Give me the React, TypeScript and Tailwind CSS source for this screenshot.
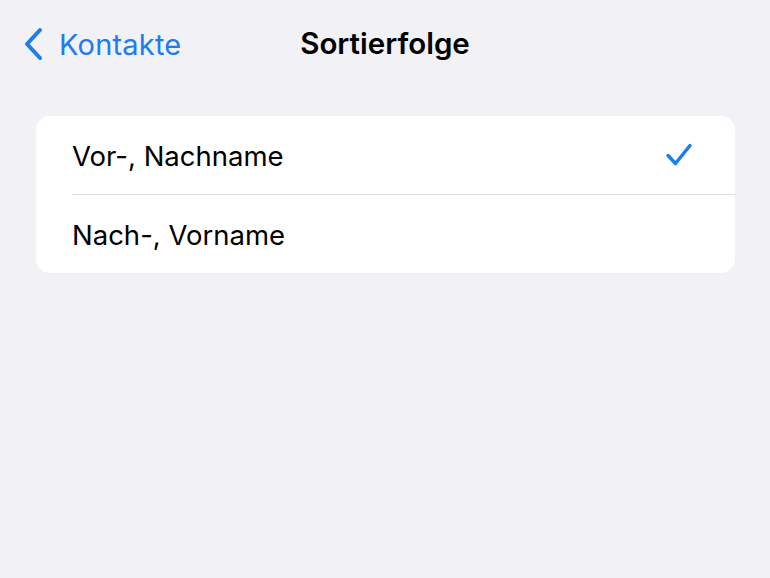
import React from "react";

export default function App() {
  return (
    <div className="w-[770px] h-[578px] bg-[#f1f1f6] overflow-hidden" style={{ fontFamily: "Inter, 'Noto Sans', sans-serif" }}>
      <div className="relative h-[88px] flex items-center">
        <div className="flex items-center pl-[22px] text-[#1c7cf0]">
          <svg width="24" height="34" viewBox="0 0 24 34" className="mr-[13px]">
            <path d="M18 3 L5 17 L18 31" fill="none" stroke="#1c7cf0" strokeWidth="4" strokeLinecap="round" strokeLinejoin="round" />
          </svg>
          <span className="text-[29px] leading-none tracking-[0.2px]">Kontakte</span>
        </div>
        <div className="absolute left-0 right-0 top-0 h-[88px] flex items-center justify-center pointer-events-none">
          <span className="text-[29.5px] font-semibold text-black leading-none">Sortierfolge</span>
        </div>
      </div>
      <div className="mt-[28px] ml-[36px] mr-[35px] bg-white rounded-[14px] overflow-hidden">
        <div className="h-[78px] flex items-center justify-between pl-[36px] pr-[42px]">
          <span className="text-[27.5px] text-black pt-[4px]">Vor-, Nachname</span>
          <svg width="28" height="26" viewBox="0 0 28 26">
            <path d="M3 13.5 L10.5 21.5 L25 3.5" fill="none" stroke="#1c7cf0" strokeWidth="3.5" strokeLinecap="round" strokeLinejoin="round" />
          </svg>
        </div>
        <div className="ml-[36px] h-px bg-[#dedee2]" />
        <div className="h-[78px] flex items-center pl-[36px]">
          <span className="text-[27.5px] text-black pt-[4px]">Nach-, Vorname</span>
        </div>
      </div>
    </div>
  );
}
